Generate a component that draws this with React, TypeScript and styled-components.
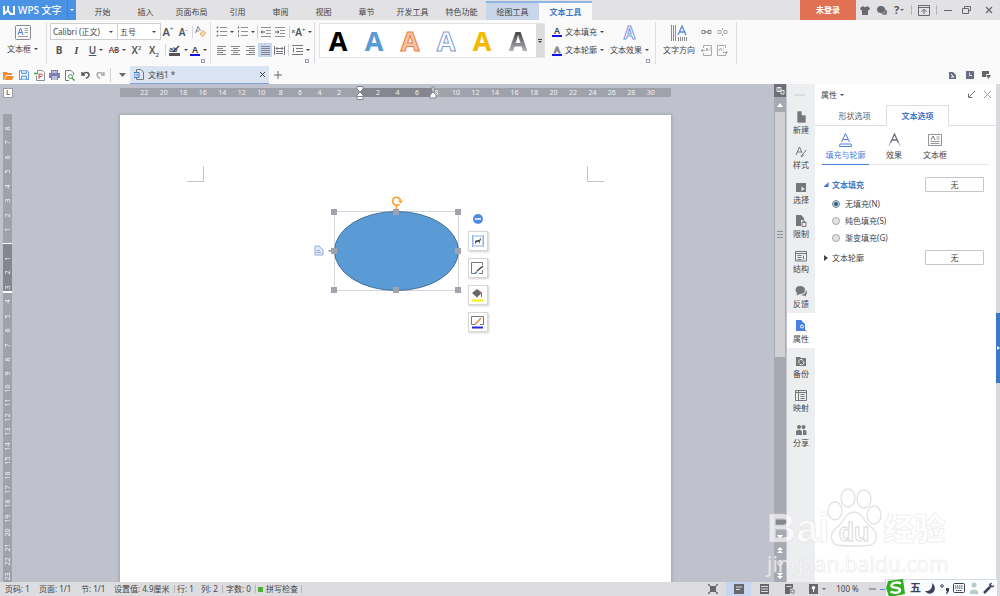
import React from "react";
import styled, { createGlobalStyle, css } from "styled-components";

const blue = "#4a7fdc";
const ink = "#444446";
const soft = "#77787c";

const GlobalStyle = createGlobalStyle`
  * { box-sizing: border-box; }
  html, body, #root { height: 100%; }
  body {
    margin: 0;
    overflow: hidden;
    color: ${ink};
    font: 8px/12px "Noto Sans", "Noto Sans CJK SC", sans-serif;
  }
  button, select, input { font: inherit; color: inherit; }
  button { padding: 0; border: 0; background: none; white-space: nowrap; }
  ul { margin: 0; padding: 0; list-style: none; }
  svg { display: block; flex: none; }
`;

const Shell = styled.div`
  display: flex;
  flex-direction: column;
  height: 100vh;
  min-height: 480px;
  background: #fafafb;
`;

const Spacer = styled.div`
  flex: 1;
`;

const Caret = styled.span`
  flex: none;
  border: 2px solid transparent;
  border-top-color: currentColor;
  border-bottom: 0;
`;

const Divider = styled.span<{ $h: number; $m?: number }>`
  flex: none;
  width: 1px;
  height: ${(p) => p.$h}px;
  margin: 0 ${(p) => p.$m ?? 0}px;
  background: #d4d4d7;
`;

/* ---------- title bar ---------- */

const TitleBar = styled.header`
  display: flex;
  align-items: stretch;
  flex: none;
  height: 20px;
  background: #e2e2e4;
`;

const Brand = styled.button`
  display: flex;
  align-items: center;
  gap: 3px;
  width: 67px;
  padding-left: 3px;
  background: #4a92e4;
  color: #fff;
  font-size: 10px;
  font-weight: 500;
`;

const BrandMenu = styled.button`
  display: flex;
  align-items: center;
  justify-content: center;
  width: 9px;
  margin-right: 5px;
  border-left: 1px solid #3d83d4;
  background: #4a92e4;
  color: #fff;
`;

const RibbonTab = styled.button<{ $w: number; $kind?: "tool" | "active" }>`
  width: ${(p) => p.$w}px;
  padding-top: 3px;
  ${(p) =>
    p.$kind &&
    css`
      margin-top: 1px;
      padding-top: 0;
      border-top: 2px solid #8fb4e2;
      background: ${p.$kind === "active" ? "#fafafb" : "#c9d5e8"};
      color: ${p.$kind === "active" ? "#3d78c9" : ink};
      font-weight: ${p.$kind === "active" ? 600 : 400};
    `}
`;

const Login = styled.button`
  width: 56px;
  margin-right: 1px;
  background: #e07253;
  color: #fff;
  font-weight: 600;
`;

const BarButton = styled.button<{ $w: number }>`
  display: flex;
  align-items: center;
  justify-content: center;
  gap: 1px;
  width: ${(p) => p.$w}px;
  color: #68696d;
`;

const Rule = styled(Divider)`
  align-self: center;
  background: #b5b5b8;
`;

/* ---------- ribbon ---------- */

const Ribbon = styled.section`
  display: flex;
  flex: none;
  height: 46px;
  padding-top: 2px;
`;

const Group = styled.div<{ $pad?: string }>`
  position: relative;
  display: flex;
  height: 42px;
  padding: ${(p) => p.$pad ?? "0 4px"};
  border-right: 1px solid #dedee1;
`;

const Rows = styled.div`
  display: flex;
  flex-direction: column;
`;

const ToolRow = styled.div`
  display: flex;
  align-items: center;
  height: 18px;
  &:first-child { height: 19px; }
`;

const Tool = styled.button<{ $w: number; $on?: boolean }>`
  display: flex;
  align-items: center;
  justify-content: center;
  gap: 3px;
  flex: none;
  width: ${(p) => p.$w}px;
  height: 14px;
  background: ${(p) => (p.$on ? "#c5d6ee" : "none")};
`;

const Big = styled.button`
  display: flex;
  flex-direction: column;
  align-items: center;
  gap: 3px;
  height: 36px;
  padding-top: 3px;
`;

const Line = styled.span`
  display: flex;
  align-items: center;
  gap: 3px;
`;

const Letter = styled.span<{ $size?: number; $weight?: number; $style?: "italic" | "underline" | "strike" }>`
  position: relative;
  font-size: ${(p) => p.$size ?? 10}px;
  font-weight: ${(p) => p.$weight ?? 600};
  line-height: 12px;
  color: #55565a;
  ${(p) => p.$style === "italic" && "font-family: 'Liberation Serif', serif; font-style: italic;"}
  ${(p) => p.$style === "underline" && "text-decoration: underline;"}
  ${(p) => p.$style === "strike" && "text-decoration: line-through #d0604c;"}
  sup, sub { font-size: 6px; line-height: 0; }
`;

const BarLetter = styled.span`
  width: 10px;
  border-bottom: 2px solid #1414e6;
  font-size: 9px;
  font-weight: 600;
  line-height: 9px;
  text-align: center;
`;

const HollowLetter = styled.span<{ $size: number; $c: string }>`
  font-size: ${(p) => p.$size}px;
  font-weight: 600;
  line-height: 16px;
  color: #fff;
  -webkit-text-stroke: 1px ${(p) => p.$c};
`;

const HollowBar = styled(BarLetter)`
  color: #fff;
  -webkit-text-stroke: 1px #8b8c90;
`;

const Combo = styled.label<{ $w: number }>`
  display: flex;
  align-items: center;
  width: ${(p) => p.$w}px;
  height: 17px;
  margin-right: -1px;
  padding: 0 4px 0 2px;
  border: 1px solid #cfcfd2;
  background: #fff;
  select {
    flex: 1;
    min-width: 0;
    padding: 0;
    border: 0;
    background: none;
    appearance: none;
  }
`;

const Launcher = styled.button`
  position: absolute;
  right: 5px;
  bottom: 1px;
  width: 4px;
  height: 4px;
  border: 1px solid #9aa0b4;
`;

const Gallery = styled.div`
  display: flex;
  height: 35px;
  margin: 1px 4px 0 4px;
  border: 1px solid #e3e3e6;
  background: #fff;
`;

const ArtButton = styled.button<{ $css: string }>`
  width: 36px;
  font-size: 27px;
  line-height: 30px;
  font-weight: 700;
  span { ${(p) => p.$css} }
`;

const GalleryMore = styled.button`
  display: flex;
  flex-direction: column;
  align-items: center;
  justify-content: center;
  gap: 1px;
  width: 8px;
  background: #dcdcde;
  &::before { content: ""; width: 4px; height: 1px; background: ${ink}; }
`;

/* ---------- quick access and document tabs ---------- */

const QuickBar = styled.nav`
  display: flex;
  align-items: center;
  flex: none;
  height: 18px;
  padding-right: 6px;
`;

const DocTab = styled.div`
  display: flex;
  align-items: center;
  gap: 4px;
  width: 139px;
  height: 18px;
  padding: 0 4px;
  border-bottom: 1px solid #7fa6dc;
  background: #dbe4f2;
`;

/* ---------- work area ---------- */

const Main = styled.main`
  display: flex;
  flex: 1;
  min-height: 0;
`;

const Workspace = styled.div`
  display: grid;
  flex: 1;
  grid-template-columns: 16px 1fr;
  grid-template-rows: 30px 1fr;
  min-width: 0;
  overflow: hidden;
  background: #bfc2cc;
`;

const TabStop = styled.button`
  width: 10px;
  height: 10px;
  margin: 4px 0 0 3px;
  border: 1px solid #9d9fa8;
  background: #fff;
  color: ${soft};
  font-size: 7px;
  font-weight: 700;
  line-height: 8px;
`;

const HRuler = styled.div`
  position: relative;
  display: flex;
  width: 551px;
  height: 9px;
  margin: 4px auto 0;
  padding: 0 10px 0 15px;
  background: linear-gradient(90deg, #a0a2ab 240px, #85868f 240px 313px, #a0a2ab 313px);
  color: #f4f4f6;
  font-size: 7px;
  line-height: 9px;
  text-align: center;
  span { flex: 1; }
`;

const Marker = styled.svg<{ $x: number }>`
  position: absolute;
  top: -2px;
  left: ${(p) => p.$x}px;
`;

const VRuler = styled.div`
  display: flex;
  flex-direction: column;
  width: 9px;
  height: 469px;
  margin-left: 3px;
  padding-top: 7px;
  background: linear-gradient(#a0a2ab 129px, #fff 129px 130px, #85868f 130px 177px, #fff 177px 179px, #a0a2ab 179px);
  color: #f4f4f6;
  font-size: 7px;
  line-height: 9px;
  span {
    flex: 1;
    writing-mode: vertical-rl;
    transform: rotate(180deg);
    text-align: center;
  }
`;

const Page = styled.article`
  position: relative;
  width: 551px;
  margin: 1px auto 0;
  background: #fff;
  box-shadow: 0 0 3px 1px #a2a4ae;
`;

const Corner = styled.i<{ $x: number; $side: "left" | "right" }>`
  position: absolute;
  top: 51px;
  left: ${(p) => p.$x}px;
  width: 17px;
  height: 16px;
  border-bottom: 1px solid #c4c4c6;
  border-${(p) => (p.$side === "left" ? "right" : "left")}: 1px solid #c4c4c6;
`;

const Shape = styled.svg`
  position: absolute;
  top: 79px;
  left: 192px;
`;

const FloatTools = styled.div`
  position: absolute;
  top: 99px;
  left: 348px;
  display: flex;
  flex-direction: column;
  align-items: center;
  gap: 7px;
`;

const FloatButton = styled.button`
  display: flex;
  align-items: center;
  justify-content: center;
  width: 20px;
  height: 20px;
  border: 1px solid #d6d6d8;
  background: #fff;
  box-shadow: 1px 1px 2px #d0d0d2;
`;

const ScrollBar = styled.div`
  display: flex;
  flex-direction: column;
  align-items: center;
  flex: none;
  width: 13px;
  background: #a8a8b2;
  border-right: 1px solid #c4c6ce;
  color: #fff;
`;

const ScrollTop = styled.button`
  display: flex;
  align-items: center;
  justify-content: center;
  width: 12px;
  height: 13px;
  background: #6e6f79;
`;

const ScrollStep = styled.button<{ $h: number }>`
  display: flex;
  align-items: center;
  justify-content: center;
  flex: none;
  height: ${(p) => p.$h}px;
`;

const Thumb = styled.div`
  display: flex;
  flex: 247;
  flex-direction: column;
  align-items: center;
  justify-content: center;
  gap: 2px;
  width: 10px;
  background: #d0d0d5;
  i { width: 6px; height: 1px; background: #8e8f98; }
`;

const TrackRest = styled.div`
  flex: 161;
`;

const Side = styled.aside`
  flex: none;
  width: 28px;
  background: #edeef0;
  &::before {
    content: "";
    display: block;
    width: 11px;
    height: 2px;
    margin: 10px auto 8px 7px;
    background: #dadce1;
  }
  ul {
    display: grid;
    grid-template-rows: repeat(10, 1fr);
    height: 348px;
  }
`;

const SideButton = styled.button<{ $on?: boolean }>`
  display: flex;
  flex-direction: column;
  align-items: center;
  gap: 1px;
  width: 100%;
  height: 100%;
  padding-top: 7px;
  background: ${(p) => (p.$on ? "#fff" : "none")};
  svg { color: ${(p) => (p.$on ? "#4a80e4" : "#75767a")}; }
`;

const Panel = styled.section`
  flex: none;
  width: 181px;
  background: #fff;
`;

const PanelHead = styled.div`
  display: flex;
  align-items: center;
  gap: 9px;
  height: 21px;
  padding: 0 5px 0 6px;
`;

const PanelTabs = styled.div`
  display: flex;
  height: 21px;
  padding-left: 8px;
  border-bottom: 1px solid #dddde0;
`;

const PanelTab = styled.button<{ $on?: boolean }>`
  width: 63px;
  height: 21px;
  color: ${(p) => (p.$on ? "#3d78c9" : "#5c5d60")};
  ${(p) =>
    p.$on &&
    css`
      border: 1px solid #dddde0;
      border-bottom-color: #fff;
      background: #fff;
      font-weight: 600;
    `}
`;

const SubTabs = styled.div`
  display: flex;
  height: 39px;
  margin: 0 7px 10px;
  border-bottom: 1px solid #e8e8ea;
`;

const SubTab = styled.button<{ $w: number; $on?: boolean }>`
  display: flex;
  flex-direction: column;
  align-items: center;
  gap: 2px;
  width: ${(p) => p.$w}px;
  height: 39px;
  padding-top: 7px;
  border-bottom: 1px solid ${(p) => (p.$on ? blue : "transparent")};
  color: ${(p) => (p.$on ? blue : ink)};
`;

const SectionRow = styled.div`
  display: flex;
  align-items: center;
  justify-content: space-between;
  height: 19px;
  padding: 0 12px 0 8px;
`;

const SectionTitle = styled.button<{ $open?: boolean }>`
  display: flex;
  align-items: center;
  gap: 3px;
  color: ${(p) => (p.$open ? "#3d78c9" : ink)};
  font-weight: ${(p) => (p.$open ? 600 : 400)};
`;

const PickButton = styled.button`
  width: 59px;
  height: 15px;
  border: 1px solid #c6c6c9;
  border-radius: 1px;
`;

const Choices = styled.fieldset`
  margin: 0;
  padding: 1px 0 2px 17px;
  border: 0;
`;

const Choice = styled.label`
  display: flex;
  align-items: center;
  gap: 5px;
  height: 17px;
  input {
    width: 8px;
    height: 8px;
    margin: 0;
    appearance: none;
    border: 1px solid #a9a9ac;
    border-radius: 50%;
    background: #e2e2e4;
  }
  input:checked {
    border-color: #7d8a94;
    background: radial-gradient(circle, #17557e 1px, #d5e6ee 3px);
  }
`;

const Edge = styled.div`
  display: flex;
  flex: none;
  width: 4px;
  padding-top: 229px;
  background: #d9dadd;
`;

const EdgeHandle = styled.button`
  display: flex;
  align-items: center;
  justify-content: center;
  width: 4px;
  height: 70px;
  background: #3b78cc;
  color: #fff;
`;

/* ---------- status bar ---------- */

const StatusBar = styled.footer`
  display: flex;
  align-items: center;
  flex: none;
  height: 14px;
  padding: 0 112px 0 5px;
  background: #dddddf;
`;

const Stat = styled.span<{ $w: number }>`
  display: flex;
  align-items: center;
  gap: 3px;
  width: ${(p) => p.$w}px;
  white-space: nowrap;
`;

const Green = styled.i`
  width: 5px;
  height: 5px;
  background: #4fae3a;
`;

const ViewButton = styled.button<{ $w: number; $on?: boolean }>`
  display: flex;
  align-items: center;
  justify-content: center;
  gap: 4px;
  width: ${(p) => p.$w}px;
  height: 14px;
  background: ${(p) => (p.$on ? "#c5d6ee" : "none")};
  color: #66676b;
`;

const ZoomLevel = styled(ViewButton)`
  color: ${ink};
`;

const ZoomTrack = styled.i`
  width: 8px;
  height: 1px;
  background: #4a8be0;
`;

const InputBar = styled.div`
  position: fixed;
  right: 2px;
  bottom: 0;
  display: flex;
  align-items: center;
  gap: 4px;
  width: 113px;
  height: 17px;
  border: 1px solid #d3dae4;
  border-bottom: 0;
  background: #fbfcfd;
  color: #3b405c;
  font-size: 11px;
  font-weight: 600;
`;

/* ---------- watermark ---------- */

const Watermark = styled.div`
  position: fixed;
  right: 53px;
  bottom: 20px;
  width: 180px;
  pointer-events: none;
  color: rgba(255, 255, 255, 0.65);
  -webkit-text-stroke: 1px rgba(215, 215, 218, 0.4);
  white-space: nowrap;
`;

const MarkTop = styled.div`
  display: flex;
  align-items: flex-end;
  height: 64px;
  font: 700 40px/48px "Liberation Sans", "Noto Sans CJK SC", sans-serif;
  svg { align-self: flex-start; margin-left: -2px; }
  b { font-size: 31px; line-height: 44px; }
`;

const MarkUrl = styled.div`
  font-size: 21px;
  line-height: 24px;
`;

/* ---------- icons ---------- */

type IconProps = { w?: number; h?: number; children: React.ReactNode; sw?: number };
const Icon = ({ w = 12, h = 12, sw = 1, children }: IconProps) => (
  <svg width={w} height={h} viewBox={`0 0 ${w} ${h}`} fill="none" stroke="currentColor" strokeWidth={sw} aria-hidden="true">
    {children}
  </svg>
);

const TextBoxIcon = ({ w = 16, h = 15, c = "#4a7fdc" }) => (
  <Icon w={w} h={h}>
    <rect x=".5" y=".5" width={w - 1} height={h - 1} rx="1" stroke="#8b8c90" />
    <path d={`M3 ${h * 0.65}L5.500 3L8 ${h * 0.65}M4 ${h * 0.5}H7`} stroke={c} />
    <path d={`M${w - 6.5} 3.500H${w - 3}M${w - 6.5} 5.500H${w - 3}M${w - 6.5} 7.500H${w - 3}M3 ${h - 3.5}H${w - 3}`} stroke="#8b8c90" strokeWidth=".8" />
  </Icon>
);

const List = ({ kind }: { kind: "dot" | "num" }) => (
  <Icon w={11} h={11}>
    {[1.5, 5.5, 9.5].map((y) => (
      <g key={y}>
        {kind === "dot" ? <circle cx="1.500" cy={y} r="1" fill="#77787c" stroke="none" /> : <path d={`M1.500 ${y - 1.3}V${y + 1.3}`} stroke={soft} />}
        <path d={`M4 ${y}H11`} stroke="#8f9094" />
      </g>
    ))}
  </Icon>
);

const Align = ({ rows }: { rows: [number, number][] }) => (
  <Icon w={9} h={9}>
    {rows.map(([a, b], i) => (
      <path key={i} d={`M${a} ${i * 2 + 0.5}H${b}`} stroke="#85868a" />
    ))}
  </Icon>
);

const Indent = ({ flip }: { flip?: boolean }) => (
  <Icon w={10} h={10}>
    <path d="M0 .5H10M5 3.500H10M5 6.500H10M0 9.500H10" stroke="#8f9094" />
    <path d={flip ? "M0 5H4M2.500 3.500L4 5L2.500 6.500" : "M4 5H0M1.500 3.500L0 5L1.500 6.500"} stroke="#55565a" />
  </Icon>
);

const sideIcons: Record<string, React.ReactNode> = {
  新建: <path d="M2 0H7L11 4V12H2ZM7 0V4H11" fill="currentColor" stroke="#edeef0" strokeWidth=".7" />,
  样式: <path d="M1 9L4.500 1L7 7M2.500 6H6M6 11C7 8 9 8 11 4M6 11L9 9" />,
  选择: (
    <>
      <path d="M1 2H11V11H1Z" fill="currentColor" stroke="none" />
      <path d="M6.500 5.500L10.500 8.500H8.500L6.500 10.500Z" fill="#edeef0" stroke="none" />
    </>
  ),
  限制: (
    <>
      <path d="M1 0H6L9 3V5H6V11H1Z" fill="currentColor" stroke="none" />
      <path d="M7 7.500H11V11.500H7ZM8 7V6H10V7" />
    </>
  ),
  结构: <path d="M.5 1.500H11.500V11H.5ZM.5 3.500H11.500M2.500 5.500H6.500M2.500 7.500H6.500M2.500 9.500H6.500M8.500 5.500V9.500" />,
  反馈: (
    <g fill="currentColor" stroke="none">
      <path d="M5 1C8 1 10 2.500 10 5S8 9 5 9L1.500 10.500L2 8C-.5 6 0 1 5 1Z" />
      <path d="M11 5C12.500 7 12 9 11 9.500V11.500L9 10.500C8 10.800 7 10.500 6 10C9 9.500 11 8 11 5Z" />
    </g>
  ),
  属性: (
    <>
      <path d="M1 0H6L10 4V11H1Z" fill="currentColor" stroke="none" />
      <circle cx="7" cy="6.500" r="1.500" stroke="#fff" />
      <path d="M8 8L11.500 11.500" stroke="currentColor" />
    </>
  ),
  备份: (
    <>
      <path d="M1 2H5L6 3H11V11H1Z" fill="currentColor" stroke="none" />
      <path d="M4 8A2.300 2.300 0 0 1 8 5.500M8.500 6A2.300 2.300 0 0 1 4.500 8.800" stroke="#edeef0" />
    </>
  ),
  映射: <path d="M.5 1.500H11.500V11.500H.5ZM.5 3.500H11.500M3.500 1.500V11.500M5.500 5.500H9.500M5.500 7.500H9.500M5.500 9.500H9.500" />,
  分享: (
    <g fill="currentColor" stroke="none">
      <circle cx="4" cy="3" r="2" />
      <circle cx="8.500" cy="3" r="2" />
      <path d="M1 11V8C1 5 7 5 7 8V11ZM8 11V6C10 5.500 11.500 6.500 11.500 8V11Z" />
    </g>
  ),
};

const tabs: [string, number, ("tool" | "active")?][] = [
  ["开始", 43], ["插入", 43], ["页面布局", 49], ["引用", 43], ["审阅", 43], ["视图", 43], ["章节", 43],
  ["开发工具", 49], ["特色功能", 49], ["绘图工具", 53, "tool"], ["文本工具", 53, "active"],
];

const arts = [
  "color:#000",
  "color:#5b9bd5",
  "color:#f6c3a0;-webkit-text-stroke:1px #e98144",
  "color:#fff;-webkit-text-stroke:1px #7d9bd8",
  "color:#f5b800",
  "background:linear-gradient(#4a4a4e 30%,#b4b4b8 80%);-webkit-background-clip:text;color:transparent",
];

const hTicks = [22, 20, 18, 16, 14, 12, 10, 8, 6, 4, 2, 0, 2, 4, 6, 8, 10, 12, 14, 16, 18, 20, 22, 24, 26, 28, 30];
const vTicks = [8, 7, 6, 5, 4, 3, 2, 1, 0, ...Array.from({ length: 23 }, (_, i) => i + 1)];

const TopBar = () => (
  <TitleBar>
    <Brand>
      <Icon w={12} h={10} sw={2}>
        <path d="M1 1V9L5 5.500L7.500 9H11V1M5 1V6" />
      </Icon>
      WPS 文字
    </Brand>
    <BrandMenu aria-label="菜单"><Caret /></BrandMenu>
    {tabs.map(([name, w, kind]) => (
      <RibbonTab key={name} $w={w} $kind={kind}>{name}</RibbonTab>
    ))}
    <Spacer />
    <Login>未登录</Login>
    <BarButton $w={16} aria-label="皮肤">
      <Icon w={10} h={9}>
        <path d="M3 0C4 1.500 6 1.500 7 0L10 2L9 4.500L8 4V9H2V4L1 4.500L0 2Z" fill="currentColor" stroke="none" />
      </Icon>
    </BarButton>
    <BarButton $w={17} aria-label="消息">
      <Icon w={10} h={9}>
        <g fill="currentColor" stroke="none">
          <ellipse cx="4" cy="3.500" rx="4" ry="3.500" />
          <path d="M8.500 3C10.500 5 10 7 9.500 7.500V9L8 8.500C6 9 4.500 8 4 7.500C7 7.500 8.500 6 8.500 3Z" />
        </g>
      </Icon>
    </BarButton>
    <BarButton $w={18} aria-label="帮助"><Letter $size={11} $weight={700}>?</Letter><Caret /></BarButton>
    <Rule $h={10} $m={3} />
    <BarButton $w={17} aria-label="功能区">
      <Icon w={12} h={11}>
        <path d="M.5 .5H11.500V10.500H.5ZM.5 2.500H11.500M6 9V4.500M3.500 6.500L6 4.500L8.500 6.500" />
      </Icon>
    </BarButton>
    <Rule $h={10} $m={4} />
    <BarButton $w={14} aria-label="最小化"><Icon w={8} h={3}><path d="M0 1.500H8" /></Icon></BarButton>
    <BarButton $w={22} aria-label="还原"><Icon w={9} h={8}><path d="M2.500 2.500V.5H8.500V4.500H6.500M.5 2.500H6.500V7.500H.5Z" /></Icon></BarButton>
    <BarButton $w={23} aria-label="关闭"><Icon w={8} h={8} sw={2}><path d="M1 1L7 7M7 1L1 7" strokeWidth="1.300" /></Icon></BarButton>
  </TitleBar>
);

const RibbonArea = () => (
  <Ribbon>
    <Group $pad="0 8px 0 7px">
      <Big>
        <TextBoxIcon />
        <Line>文本框<Caret /></Line>
      </Big>
    </Group>
    <Group $pad="0 1px 0 3px">
      <Rows>
        <ToolRow>
          <Combo $w={68}><select aria-label="字体"><option>Calibri (正文)</option></select><Caret /></Combo>
          <Combo $w={44}><select aria-label="字号"><option>五号</option></select><Caret /></Combo>
          <Tool $w={16}><Letter $size={11}>A<sup>+</sup></Letter></Tool>
          <Tool $w={14}><Letter $size={10}>A<sup>-</sup></Letter></Tool>
          <Divider $h={12} $m={2} />
          <Tool $w={10} aria-label="清除格式">
            <Icon w={11} h={11}>
              <path d="M.5 7L3 .5L5.500 5M1.500 5H4" stroke="#7c7d90" />
              <path d="M5 8L8 4.500L10.500 7L8 10.500Z" fill="#f7d9b8" stroke="#e9a55c" />
            </Icon>
          </Tool>
        </ToolRow>
        <ToolRow>
          <Tool $w={18}><Letter $weight={700}>B</Letter></Tool>
          <Tool $w={17}><Letter $size={11} $style="italic">I</Letter></Tool>
          <Tool $w={22}><Letter $style="underline">U</Letter><Caret /></Tool>
          <Tool $w={21}><Letter $size={8} $style="strike">AB</Letter><Caret /></Tool>
          <Tool $w={17}><Letter>X<sup>2</sup></Letter></Tool>
          <Tool $w={18}><Letter>X<sub>2</sub></Letter></Tool>
          <Divider $h={12} $m={2} />
          <Tool $w={20} aria-label="突出显示">
            <Icon w={12} h={11}>
              <text x="0" y="7" fontSize="7" fontWeight="600" fill={ink} stroke="none">ab</text>
              <path d="M4 7L10 1" strokeWidth="1.500" />
              <path d="M0 9.500H11" stroke="#555" strokeWidth="3" />
            </Icon>
            <Caret />
          </Tool>
          <Tool $w={21}><BarLetter>A</BarLetter><Caret /></Tool>
        </ToolRow>
      </Rows>
      <Launcher aria-label="字体设置" />
    </Group>
    <Group $pad="0 2px 0 4px">
      <Rows>
        <ToolRow>
          <Tool $w={20} aria-label="项目符号"><List kind="dot" /><Caret /></Tool>
          <Tool $w={21} aria-label="编号"><List kind="num" /><Caret /></Tool>
          <Divider $h={12} $m={1} />
          <Tool $w={14} aria-label="减少缩进"><Indent /></Tool>
          <Tool $w={14} aria-label="增加缩进"><Indent flip /></Tool>
          <Divider $h={12} $m={2} />
          <Tool $w={20}><Letter $size={10}>ˣA<sup>+</sup></Letter><Caret /></Tool>
        </ToolRow>
        <ToolRow>
          <Tool $w={13} aria-label="左对齐"><Align rows={[[0, 9], [0, 6], [0, 9], [0, 6], [0, 9]]} /></Tool>
          <Tool $w={15} aria-label="居中"><Align rows={[[0, 9], [2, 7], [0, 9], [2, 7], [0, 9]]} /></Tool>
          <Tool $w={15} aria-label="右对齐"><Align rows={[[0, 9], [3, 9], [0, 9], [3, 9], [0, 9]]} /></Tool>
          <Tool $w={14} $on aria-label="两端对齐"><Align rows={[[0, 9], [0, 9], [0, 9], [0, 9], [0, 9]]} /></Tool>
          <Tool $w={14} aria-label="分散对齐">
            <Icon w={11} h={9}><path d="M.5 0V9M10.500 0V9M2 2.500H9M3.500 1L2 2.500L3.500 4M7.500 1L9 2.500L7.500 4M2 5.500H9M2 7.500H9" stroke={soft} /></Icon>
          </Tool>
          <Divider $h={12} $m={2} />
          <Tool $w={20} aria-label="行距">
            <Icon w={11} h={10}><path d="M0 .5H11M4 3.500H11M4 6.500H11M0 9.500H11M1.500 2.500V7.500" stroke={soft} /></Icon>
            <Caret />
          </Tool>
        </ToolRow>
      </Rows>
      <Launcher aria-label="段落设置" />
    </Group>
    <Gallery>
      {arts.map((a) => (
        <ArtButton key={a} $css={a}><span>A</span></ArtButton>
      ))}
      <GalleryMore aria-label="更多样式"><Caret /></GalleryMore>
    </Gallery>
    <Group $pad="0 6px 0 0">
      <Rows>
        <ToolRow><Tool $w={58}><BarLetter>A</BarLetter>文本填充<Caret /></Tool></ToolRow>
        <ToolRow><Tool $w={58}><HollowBar>A</HollowBar>文本轮廓<Caret /></Tool></ToolRow>
      </Rows>
      <Divider $h={0} $m={1} />
      <Big>
        <HollowLetter $size={17} $c="#7d9bdc">A</HollowLetter>
        <Line>文本效果<Caret /></Line>
      </Big>
      <Launcher aria-label="文本设置" />
    </Group>
    <Group $pad="0 6px 0 7px">
      <Big>
        <Icon w={17} h={16}>
          <path d="M.5 0V16M2.500 0V16M4.500 0V16M7.500 12V16M9.500 12V16M11.500 12V16M13.500 12V16M15.500 12V16" stroke="#8b8c90" />
          <path d="M7 10L11 1L15 10M8.500 7H13.500" stroke="#5b86e4" strokeWidth="1.300" />
        </Icon>
        文字方向
      </Big>
      <Divider $h={0} $m={1} />
      <Rows>
        <ToolRow>
          <Tool $w={16} aria-label="创建链接">
            <Icon w={11} h={6}><path d="M1 1.500H4V4.500H1ZM7 1.500H10V4.500H7ZM3 3H8" stroke="#808185" /></Icon>
          </Tool>
          <Tool $w={16} aria-label="断开链接">
            <Icon w={11} h={8}><path d="M1 2.500H4V5.500H1ZM7 2.500H10V5.500H7ZM5.500 0V2M5.500 6V8" stroke="#a9aaae" /></Icon>
          </Tool>
        </ToolRow>
        <ToolRow>
          <Tool $w={16} aria-label="前一文本框">
            <Icon w={11} h={11}><path d="M2.500 3V.5H10.500V10.500H2.500V8M0 5.500H4M2 4L0 5.500L2 7M5 6L6 3L7 6M8.500 3H9.500M8.500 5H9.500" stroke="#a9aaae" /></Icon>
          </Tool>
          <Tool $w={16} aria-label="后一文本框">
            <Icon w={11} h={11}><path d="M8.500 3V.5H.5V10.500H8.500V9M6 7.500H10.500M9 6L10.500 7.500L9 9M2 6L3.500 3L5 6M6 3H7M6 5H7" stroke="#a9aaae" /></Icon>
          </Tool>
        </ToolRow>
      </Rows>
    </Group>
  </Ribbon>
);

const DocBar = () => (
  <QuickBar>
    <Tool $w={16} aria-label="打开">
      <Icon w={11} h={9}><path d="M0 9V1H4L5 2H9V4H3L1 9ZM3.500 5H11L9 9H1.500Z" fill="#f28a2e" stroke="none" /></Icon>
    </Tool>
    <Tool $w={16} aria-label="保存">
      <Icon w={10} h={10}><path d="M.5 .5H8L9.500 2V9.500H.5Z" stroke="#5b9be8" /><path d="M2.500 .5V3.500H7.500V.5M2.500 9.500V6H7.500V9.500" stroke="#5b9be8" fill="#cfe1f8" /></Icon>
    </Tool>
    <Tool $w={15} aria-label="输出为PDF">
      <Icon w={11} h={11}><path d="M3.500 3V.5H8.500L10.500 2.500V10.500H2.500V6" stroke="#8b8c90" /><path d="M5 9V4H7C9 4 9 6.500 7 6.500H5" stroke="#d0493c" /><path d="M0 3.500H4" stroke="#3fa350" strokeWidth="1.500" /></Icon>
    </Tool>
    <Tool $w={15} aria-label="打印">
      <Icon w={11} h={10}><path d="M2 0H9V3H11V8H9V10H2V8H0V3H2Z" fill="#7c7fb8" stroke="none" /><path d="M3 2H8M3 7H8M3 9H8" stroke="#fff" /></Icon>
    </Tool>
    <Tool $w={16} aria-label="打印预览">
      <Icon w={10} h={11}><path d="M4 10.500H.5V.5H6L8.500 3V5" stroke="#77787c" /><circle cx="5.500" cy="6.500" r="2" stroke="#4e9a56" /><path d="M7 8L9.500 10.500" stroke="#4e9a56" strokeWidth="1.500" /></Icon>
    </Tool>
    <Tool $w={15} aria-label="撤销">
      <Icon w={9} h={8}><path d="M1 1V4H4M1 4C3 .5 8 .5 8 4C8 6 6 7 5 7.500" stroke="#55565a" strokeWidth="1.500" /></Icon>
    </Tool>
    <Tool $w={14} aria-label="恢复">
      <Icon w={9} h={8}><path d="M8 1V4H5M8 4C6 .5 1 .5 1 4C1 6 3 7 4 7.500" stroke="#a9aaae" strokeWidth="1.500" /></Icon>
    </Tool>
    <Divider $h={14} $m={3} />
    <Tool $w={16} aria-label="更多"><Icon w={7} h={4}><path d="M0 0H7L3.500 4Z" fill="#66676b" stroke="none" /></Icon></Tool>
    <DocTab>
      <Icon w={10} h={11}><path d="M2.500 3V.5H7L9.500 3V10.500H2.500V9" stroke="#77787c" /><path d="M0 3.500H5V8.500H0ZM1.500 6H4" stroke="#3d78c9" /></Icon>
      文档1 *
      <Spacer />
      <button aria-label="关闭文档"><Icon w={5} h={5}><path d="M0 0L5 5M5 0L0 5" /></Icon></button>
    </DocTab>
    <Tool $w={18} aria-label="新建文档"><Icon w={8} h={8}><path d="M4 0V8M0 4H8" stroke="#66676b" /></Icon></Tool>
    <Spacer />
    <Tool $w={17} aria-label="文档漫游"><Icon w={7} h={7}><path d="M0 0H4L7 3V7H0Z" fill="#6a6d85" stroke="none" /><path d="M2 2L5 5M2 5H5" stroke="#fff" /></Icon></Tool>
    <Tool $w={17} aria-label="历史"><Icon w={8} h={8}><path d="M0 0H8V8H0Z" fill="#6a6d85" stroke="none" /><path d="M3.500 1.500V4.500H6" stroke="#dfe3f4" /></Icon></Tool>
    <Tool $w={16} aria-label="窗口"><Icon w={9} h={8}><path d="M0 0H7V3H4V6H0ZM4 4H9L6.500 8Z" fill="#66676b" stroke="none" /></Icon></Tool>
  </QuickBar>
);

const Drawing = () => (
  <>
    <Shape width="150" height="100" viewBox="0 0 150 100" fill="none">
      <path d="M3 52H7L11 56V61H3Z" fill="#e3ebfa" stroke="#8fabe0" />
      <path d="M4.500 56.500H8M4.500 58.500H9" stroke="#8fabe0" />
      <path d="M16 56H20L18 58.500Z" fill="#9b9ca0" />
      <rect x="22.500" y="17.500" width="124" height="79" stroke="#d5d5dc" />
      <ellipse cx="84.500" cy="57" rx="62" ry="39.500" fill="#5b9bd5" stroke="#41719c" />
      {[[22, 18], [84, 18], [146, 18], [22, 57], [146, 57], [22, 96], [84, 96], [146, 96]].map(([x, y]) => (
        <rect key={`${x}-${y}`} x={x - 3} y={y - 3} width="6" height="6" fill="#a0a2ae" />
      ))}
      <path d="M84.500 11.500V15M87.500 10A4 4 0 1 1 88.500 6.500" stroke="#f5a02c" strokeWidth="1.600" />
      <path d="M86 6.500H91L88.500 9.500Z" fill="#f5a02c" />
    </Shape>
    <FloatTools>
      <Icon w={12} h={10}><circle cx="6" cy="5" r="5" fill="#4f8de0" stroke="none" /><path d="M3 5H9" stroke="#fff" strokeWidth="1.500" /></Icon>
      <FloatButton aria-label="布局选项">
        <Icon w={12} h={12}><path d="M0 1H12M0 3H12M0 5H12M0 7H12M0 9H12M0 11H12" stroke="#8fb0ec" /><path d="M.5 0V12M11.500 0V12" stroke="#8fb0ec" /><rect x="2" y="2" width="8" height="8" fill="#fff" stroke="none" /><path d="M3 9V6L5 5H7L9 3L9 5L8 6V9L7 7H5Z" fill="#55565a" stroke="none" /></Icon>
      </FloatButton>
      <FloatButton aria-label="形状样式">
        <Icon w={13} h={13}><path d="M4 11.500H.5V.5H11.500V3M11.500 8V11.500H8" stroke="#77787c" /><path d="M6 9L12 4" strokeWidth="1.500" /><path d="M3 12C4 10 5 9 6.500 9.500C6 11.500 5 12 3 12Z" fill="#4a7fdc" stroke="none" /></Icon>
      </FloatButton>
      <FloatButton aria-label="形状填充">
        <Icon w={13} h={13}><path d="M1 4L6 0L10.500 4L6 8.500Z" fill="#66676b" stroke="none" /><path d="M8 1.500L10.500 4V8" stroke="#d0493c" /><path d="M1 11.500H12" stroke="#f4f000" strokeWidth="2" /></Icon>
      </FloatButton>
      <FloatButton aria-label="形状轮廓">
        <Icon w={13} h={13}><path d="M4 8.500H.5V.5H12.500V8.500H9" stroke="#77787c" /><path d="M4 8.500L10 2" stroke="#ee8a3c" strokeWidth="1.500" /><path d="M1 11.500H12" stroke="#2424dc" strokeWidth="2" /></Icon>
      </FloatButton>
    </FloatTools>
  </>
);

const Properties = () => (
  <Panel>
    <PanelHead>
      <Line>属性<Caret /></Line>
      <Spacer />
      <button aria-label="停靠"><Icon w={7} h={7}><path d="M7 0L1 6M.5 2.500V6.500H4.500" stroke={soft} /></Icon></button>
      <button aria-label="关闭窗格"><Icon w={7} h={7}><path d="M0 0L7 7M7 0L0 7" stroke="#9b9ca0" /></Icon></button>
    </PanelHead>
    <PanelTabs>
      <PanelTab>形状选项</PanelTab>
      <PanelTab $on>文本选项</PanelTab>
    </PanelTabs>
    <SubTabs>
      <SubTab $w={47} $on>
        <Icon w={13} h={14}><path d="M2.500 9L6.500 .5L10.500 9M4 6.500H9M1 11H12L12.500 13.500H.5Z" /></Icon>
        填充与轮廓
      </SubTab>
      <SubTab $w={50}>
        <Icon w={13} h={14}><path d="M2.500 10L6.500 1L10.500 10M4 7H9" stroke="#6d6f80" strokeWidth="1.300" /><path d="M2 10L1 13M11 10L12 13" stroke="#b5b6c2" /></Icon>
        效果
      </SubTab>
      <SubTab $w={32}>
        <Icon w={14} h={14}>
          <path d="M.5 1.500H13.500V12.500H.5ZM8.500 4H11.500M8.500 6H11.500M2.500 10.500H11.500M2.500 8.500H11.500" stroke="#77787c" strokeWidth=".8" />
          <path d="M3 7L5 3L7 7" stroke="#77787c" />
        </Icon>
        文本框
      </SubTab>
    </SubTabs>
    <SectionRow>
      <SectionTitle $open><Icon w={6} h={5}><path d="M5.500 0V5H.5Z" fill="currentColor" stroke="none" /></Icon>文本填充</SectionTitle>
      <PickButton>无</PickButton>
    </SectionRow>
    <Choices aria-label="文本填充">
      <Choice><input type="radio" name="fill" defaultChecked />无填充(N)</Choice>
      <Choice><input type="radio" name="fill" />纯色填充(S)</Choice>
      <Choice><input type="radio" name="fill" />渐变填充(G)</Choice>
    </Choices>
    <SectionRow>
      <SectionTitle><Icon w={6} h={6}><path d="M1 0L5 3L1 6Z" fill="currentColor" stroke="none" /></Icon>文本轮廓</SectionTitle>
      <PickButton>无</PickButton>
    </SectionRow>
  </Panel>
);

const Footer = () => (
  <StatusBar>
    <Stat $w={34}>页码: 1</Stat>
    <Stat $w={42}>页面: 1/1</Stat>
    <Stat $w={33}>节: 1/1</Stat>
    <Stat $w={60}>设置值: 4.9厘米</Stat>
    <Rule $h={8} />
    <Stat $w={26}>&nbsp;行: 1</Stat>
    <Stat $w={20}>列: 2</Stat>
    <Rule $h={8} $m={1} />
    <Stat $w={29}>&nbsp;字数: 0</Stat>
    <Rule $h={8} $m={2} />
    <Stat $w={43}><Green />拼写检查</Stat>
    <Rule $h={8} />
    <Spacer />
    <ViewButton $w={26} aria-label="全屏"><Icon w={10} h={10}><path d="M2 2H8V8H2Z" fill="currentColor" stroke="none" /><path d="M0 0L2 2M10 0L8 2M0 10L2 8M10 10L8 8" strokeWidth="1.500" /></Icon></ViewButton>
    <ViewButton $w={25} $on aria-label="页面视图"><Icon w={10} h={10}><path d="M0 0H10V10H0Z" fill="currentColor" stroke="none" /><path d="M2 3H8M2 5.500H6" stroke="#dddddf" /></Icon></ViewButton>
    <ViewButton $w={26} aria-label="大纲"><Icon w={9} h={10}><path d="M0 0H9V10H0Z" fill="currentColor" stroke="none" /><path d="M1 2.500H8M1 5H8M1 7.500H8" stroke="#dddddf" /></Icon></ViewButton>
    <ViewButton $w={26} aria-label="Web版式"><Icon w={10} h={10}><path d="M0 0H8V4L5 5V10H0Z" fill="currentColor" stroke="none" /><path d="M1.500 2.500H6.500" stroke="#dddddf" /><circle cx="7.500" cy="7.500" r="1.800" /></Icon></ViewButton>
    <ViewButton $w={28} aria-label="护眼模式"><Icon w={9} h={10}><path d="M0 0H9V10H0Z" fill="currentColor" stroke="none" /><path d="M4.500 2C7 2 6.500 5 5 5.500V8H4V5.500C2.500 5 2 2 4.500 2Z" fill="#fff" stroke="none" /></Icon><Caret /></ViewButton>
    <ZoomLevel $w={33}>100 %</ZoomLevel>
    <ViewButton $w={16} aria-label="缩小"><Icon w={7} h={2}><path d="M0 1H7" /></Icon></ViewButton>
    <ZoomTrack />
  </StatusBar>
);

const Ime = () => (
  <InputBar>
    <Icon w={20} h={18}>
      <path d="M2 2L17 0L19 15L3 18L0 9Z" fill="#2fae1e" stroke="none" />
      <path d="M15 4.500C11 2.500 5 4 5.500 7C6 9.500 14 8 14 11C14 14 8 14.500 4.500 12.500" stroke="#fff" strokeWidth="2.500" />
    </Icon>
    五
    <Icon w={11} h={11}><path d="M7 0C11 3 11 9 6 10.500C4 11 1.500 10 0 8C5 8.500 8 5 7 0Z" fill="currentColor" stroke="none" /></Icon>
    <Icon w={9} h={11}><circle cx="2" cy="3" r="1.300" /><path d="M6 5H9V8L7 11H6L7 8H6Z" fill="currentColor" stroke="none" /></Icon>
    <Icon w={12} h={10}><rect x=".5" y=".5" width="11" height="9" rx="1" /><path d="M2 3H10M2 5H10M3 7.500H9" strokeDasharray="1.400 .6" /></Icon>
    <Icon w={10} h={12}><g fill="#b5cdc6" stroke="none"><circle cx="5" cy="3" r="2.500" /><path d="M1 12C-1 6 11 6 9 12Z" /></g></Icon>
    <Icon w={12} h={12}><path d="M1 11L7 5" strokeWidth="2.500" /><path d="M9 .8C6 .5 5.500 4 7 5S11.500 5.500 11.300 3L9.300 4L8 3Z" fill="currentColor" stroke="none" /></Icon>
  </InputBar>
);

const Mark = () => (
  <Watermark aria-hidden="true">
    <MarkTop>
      Bai
      <svg width="56" height="60" viewBox="0 0 56 60" fill="rgba(255,255,255,.65)" stroke="rgba(205,205,208,.6)" strokeWidth="1.300">
        <ellipse cx="8" cy="23" rx="7" ry="9" />
        <ellipse cx="21" cy="10" rx="7" ry="9" />
        <ellipse cx="37" cy="11" rx="7" ry="9" />
        <ellipse cx="47" cy="27" rx="7" ry="9" />
        <path d="M27 24C36 24 37 35 45 40C52 46 50 57 41 57.500C34 58 20 58 13 57.500C3 57 2 46 9 40C17 35 18 24 27 24Z" />
        <text x="27" y="53" textAnchor="middle" fontSize="25" fontWeight="700">du</text>
      </svg>
      <b>经验</b>
    </MarkTop>
    <MarkUrl>jingyan.baidu.com</MarkUrl>
  </Watermark>
);

export default function App() {
  return (
    <Shell>
      <GlobalStyle />
      <TopBar />
      <RibbonArea />
      <DocBar />
      <Main>
        <Workspace>
          <TabStop aria-label="制表位">L</TabStop>
          <HRuler>
            {hTicks.map((t, i) => <span key={i}>{t || ""}</span>)}
            <Marker $x={236} width="8" height="14" viewBox="0 0 8 14" fill="#fff" stroke="#85868f">
              <path d="M1 .5H7V3L4 6L1 3ZM4 6L7 9V13.500H1V9ZM1 10.500H7" />
            </Marker>
            <Marker $x={309} width="8" height="14" viewBox="0 0 8 14" fill="#fff" stroke="#85868f">
              <path d="M3 1V6H5V1ZM4 6L7 9V12H1V9Z" />
            </Marker>
          </HRuler>
          <VRuler>
            {vTicks.map((t, i) => <span key={i}>{t || ""}</span>)}
          </VRuler>
          <Page>
            <Corner $x={67} $side="left" />
            <Corner $x={467} $side="right" />
            <Drawing />
          </Page>
        </Workspace>
        <ScrollBar>
          <ScrollTop aria-label="标尺">
            <Icon w={9} h={9}><path d="M1 1.500H5V5.500H1ZM3 1V6M5 4.500H8V8H5Z" stroke="#e8e8ec" /></Icon>
          </ScrollTop>
          <ScrollStep $h={15} aria-label="向上"><Icon w={6} h={4}><path d="M0 4H6L3 0Z" fill="#fff" stroke="none" /></Icon></ScrollStep>
          <Thumb><i /><i /><i /></Thumb>
          <TrackRest />
          <ScrollStep $h={14} aria-label="拆分"><Icon w={11} h={6}><rect width="11" height="6" fill="#85868f" stroke="none" /></Icon></ScrollStep>
          <ScrollStep $h={13} aria-label="向下"><Icon w={6} h={4}><path d="M0 0H6L3 4Z" fill="#fff" stroke="none" /></Icon></ScrollStep>
          <ScrollStep $h={13} aria-label="上一页"><Icon w={6} h={6}><path d="M0 3H6L3 0ZM0 6H6L3 3Z" fill="#fff" stroke="none" /></Icon></ScrollStep>
          <ScrollStep $h={13} aria-label="浏览对象"><Icon w={6} h={6}><circle cx="3" cy="3" r="2.300" stroke="#fff" /></Icon></ScrollStep>
          <ScrollStep $h={13} aria-label="下一页"><Icon w={6} h={6}><path d="M0 0H6L3 3ZM0 3H6L3 6Z" fill="#fff" stroke="none" /></Icon></ScrollStep>
        </ScrollBar>
        <Side>
          <ul>
            {Object.entries(sideIcons).map(([name, icon]) => (
              <li key={name}>
                <SideButton $on={name === "属性"}><Icon>{icon}</Icon>{name}</SideButton>
              </li>
            ))}
          </ul>
        </Side>
        <Properties />
        <Edge><EdgeHandle aria-label="展开"><Icon w={3} h={4}><path d="M0 0L3 2L0 4Z" fill="#fff" stroke="none" /></Icon></EdgeHandle></Edge>
      </Main>
      <Footer />
      <Mark />
      <Ime />
    </Shell>
  );
}
